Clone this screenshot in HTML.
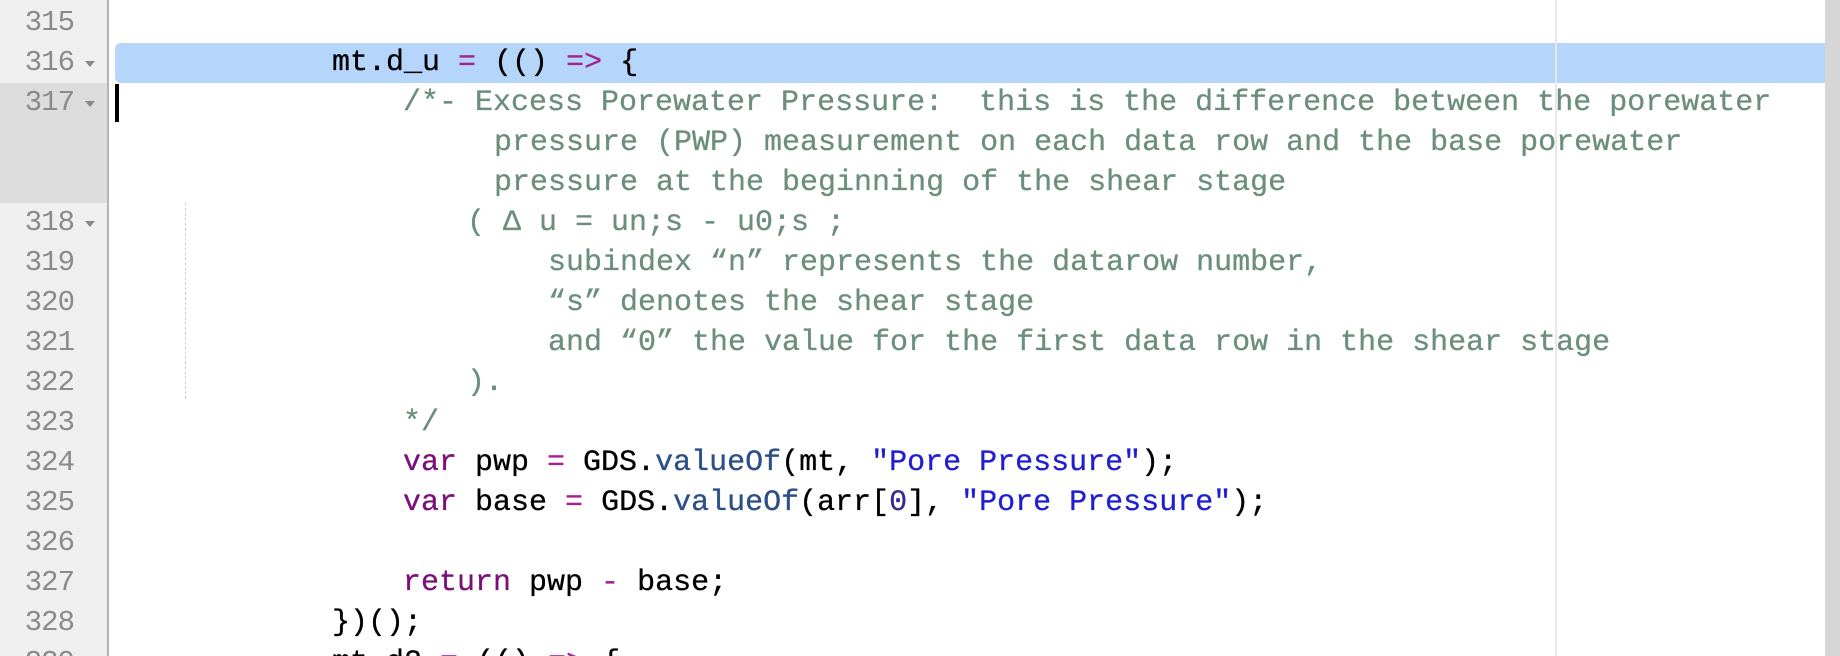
<!DOCTYPE html>
<html><head><meta charset="utf-8"><style>
html,body{margin:0;padding:0;width:1840px;height:656px;overflow:hidden;background:#fff;position:relative}
.g{position:absolute;left:0;top:0;width:107px;height:656px;background:#efefef;border-right:2px solid #b4b4b4}
.g17{position:absolute;left:0;top:83px;width:107px;height:120px;background:#dcdcdc}
.n{position:absolute;left:0;width:74px;text-align:right;font:29px/40px "Liberation Mono",monospace;color:#8a8a8a;letter-spacing:-1px}
.f{position:absolute;left:85px;width:0;height:0;border-left:5px solid transparent;border-right:5px solid transparent;border-top:6px solid #888}
.hl{position:absolute;left:115px;top:43px;width:1710px;height:40px;background:#b5d5fb;border-radius:6px 0 0 6px}
.pm{position:absolute;left:1555px;top:0;width:2px;height:656px;background:#e8e8e8}
.sb{position:absolute;left:1825px;top:0;width:15px;height:656px;background:#d6d6d6}
.cur{position:absolute;left:115px;top:84px;width:4px;height:38px;background:#000}
.dl{position:absolute;left:185px;top:203px;height:196px;border-left:1px dashed #d0d0d0}
.t{position:absolute;font:30px/40px "Liberation Mono",monospace;color:#000;white-space:pre;-webkit-text-stroke:0.3px currentColor}
.c{color:#6b8f7b}.k{color:#7a1078}.o{color:#a3238f}.s{color:#1f1fd0}.p{color:#2c4f86}.m{color:#3a2a90}
</style></head><body>
<div class="g"></div><div class="g17"></div>
<div class="hl"></div><div class="pm"></div><div class="sb"></div>
<div class="n" style="top:3px">315</div>
<div class="n" style="top:43px">316</div><div class="f" style="top:61px"></div>
<div class="n" style="top:83px">317</div><div class="f" style="top:101px"></div>
<div class="n" style="top:203px">318</div><div class="f" style="top:221px"></div>
<div class="n" style="top:243px">319</div>
<div class="n" style="top:283px">320</div>
<div class="n" style="top:323px">321</div>
<div class="n" style="top:363px">322</div>
<div class="n" style="top:403px">323</div>
<div class="n" style="top:443px">324</div>
<div class="n" style="top:483px">325</div>
<div class="n" style="top:523px">326</div>
<div class="n" style="top:563px">327</div>
<div class="n" style="top:603px">328</div>
<div class="n" style="top:643px">329</div>
<div class="cur"></div><div class="dl"></div>
<div class="t" style="left:332px;top:43px">mt.d_u <span class="o">=</span> (() <span class="o">=&gt;</span> {</div>
<div class="t c" style="left:403px;top:83px">/*- Excess Porewater Pressure:  this is the difference between the porewater</div>
<div class="t c" style="left:494px;top:123px">pressure (PWP) measurement on each data row and the base porewater</div>
<div class="t c" style="left:494px;top:163px">pressure at the beginning of the shear stage</div>
<div class="t c" style="left:467px;top:203px">( Δ u = un;s - u0;s ;</div>
<div class="t c" style="left:548px;top:243px">subindex “n” represents the datarow number,</div>
<div class="t c" style="left:548px;top:283px">“s” denotes the shear stage</div>
<div class="t c" style="left:548px;top:323px">and “0” the value for the first data row in the shear stage</div>
<div class="t c" style="left:467px;top:363px">).</div>
<div class="t c" style="left:403px;top:403px">*/</div>
<div class="t" style="left:403px;top:443px"><span class="k">var</span> pwp <span class="o">=</span> GDS.<span class="p">valueOf</span>(mt, <span class="s">"Pore Pressure"</span>);</div>
<div class="t" style="left:403px;top:483px"><span class="k">var</span> base <span class="o">=</span> GDS.<span class="p">valueOf</span>(arr[<span class="m">0</span>], <span class="s">"Pore Pressure"</span>);</div>
<div class="t" style="left:403px;top:563px"><span class="k">return</span> pwp <span class="o">-</span> base;</div>
<div class="t" style="left:332px;top:603px">})();</div>
<div class="t" style="left:332px;top:643px">mt.d2 <span class="o">=</span> (() <span class="o">=&gt;</span> {</div>
</body></html>
